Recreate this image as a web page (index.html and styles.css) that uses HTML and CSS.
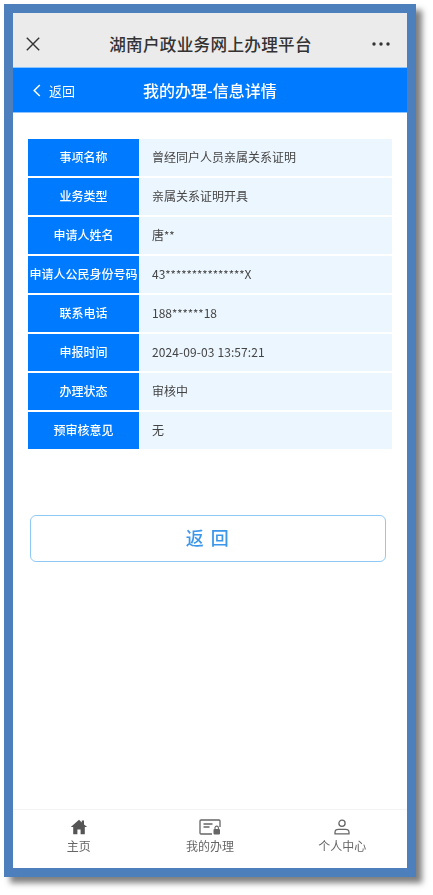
FILE: index.html
```html
<!DOCTYPE html>
<html lang="zh-CN">
<head>
<meta charset="utf-8">
<title>我的办理-信息详情</title>
<link rel="stylesheet" href="styles.css">
</head>
<body>
<div class="frame">
  <header class="wxbar">
    <svg class="wx-close" width="14" height="14" viewBox="0 0 14 14"><path d="M.8.8 13.2 13.2M13.200.8.800 13.200" fill="none" stroke="#333" stroke-width="1.400"/></svg>
    <h1 class="wx-title">湖南户政业务网上办理平台</h1>
    <svg class="wx-more" width="18" height="4" viewBox="0 0 18 4"><circle cx="2" cy="2" r="1.700" fill="#333"/><circle cx="9" cy="2" r="1.700" fill="#333"/><circle cx="16" cy="2" r="1.700" fill="#333"/></svg>
  </header>
  <nav class="pagebar">
    <span class="back">
      <svg width="8" height="13" viewBox="0 0 8 13"><path d="M6.800 1 1.200 6.500l5.600 5.500" fill="none" stroke="#fff" stroke-width="1.500"/></svg>
      <span>返回</span>
    </span>
    <h2 class="page-title">我的办理-信息详情</h2>
  </nav>
  <main class="content">
    <div class="table">
      <div class="row"><div class="label">事项名称</div><div class="value">曾经同户人员亲属关系证明</div></div>
      <div class="row"><div class="label">业务类型</div><div class="value">亲属关系证明开具</div></div>
      <div class="row"><div class="label">申请人姓名</div><div class="value"><span>唐<span class="mask">**</span></span></div></div>
      <div class="row"><div class="label">申请人公民身份号码</div><div class="value"><span>43<span class="mask">***************</span>X</span></div></div>
      <div class="row"><div class="label">联系电话</div><div class="value"><span>188<span class="mask">******</span>18</span></div></div>
      <div class="row"><div class="label">申报时间</div><div class="value date">2024-09-03 13:57:21</div></div>
      <div class="row"><div class="label">办理状态</div><div class="value">审核中</div></div>
      <div class="row"><div class="label">预审核意见</div><div class="value">无</div></div>
    </div>
    <button class="return" type="button">返 回</button>
  </main>
  <footer class="tabbar">
    <div class="tab">
      <svg width="18" height="16" viewBox="0 0 18 16"><path d="M9 .8.800 8h2.400v7.200h4.200v-4.600h3.200v4.600h4.200V8h2.400L14 5.400V1.600h-2.200v1.900z" fill="#555"/></svg>
      <span>主页</span>
    </div>
    <div class="tab">
      <svg width="22" height="16" viewBox="0 0 22 16"><path d="M13 15H2a1 1 0 0 1-1-1V2a1 1 0 0 1 1-1h18a1 1 0 0 1 1 1v6" fill="none" stroke="#666" stroke-width="1.300"/><path d="M4.500 5h9M4.500 8h6" stroke="#666" stroke-width="1.300"/><rect x="14.500" y="10" width="6.500" height="5.500" rx="1" fill="#666"/><path d="M16 10V8.800a1.700 1.700 0 0 1 3.400 0V10" fill="none" stroke="#666" stroke-width="1.100"/></svg>
      <span>我的办理</span>
    </div>
    <div class="tab tab-me">
      <svg width="16" height="16" viewBox="0 0 16 16"><circle cx="8" cy="4.300" r="3.100" fill="none" stroke="#666" stroke-width="1.300"/><path d="M1 14.800v-1.500C1 11.500 2.500 10.300 4.300 10.300h7.400c1.800 0 3.300 1.200 3.300 3v1.500z" fill="none" stroke="#666" stroke-width="1.300"/></svg>
      <span>个人中心</span>
    </div>
  </footer>
</div>
</body>
</html>
```

FILE: styles.css
```css
* { box-sizing: border-box; }
html, body { margin: 0; padding: 0; background: #fff; }
body {
  width: 433px;
  height: 895px;
  overflow: hidden;
  padding: 4px 0 0 4px;
  font-family: "Noto Sans CJK SC", "Noto Sans", sans-serif;
}
.frame {
  width: 412px;
  height: 873px;
  border: 9px solid #4d7fbd;
  background: #fff;
  box-shadow: 6px 6px 6px rgba(0, 0, 0, .5);
  display: flex;
  flex-direction: column;
  filter: blur(.5px);
}
.wxbar {
  height: 54px;
  flex: none;
  background: #ebebeb;
  display: grid;
  grid-template-columns: 1fr auto 1fr;
  align-items: center;
  padding: 8px 17px 0 13px;
}
.wx-more { justify-self: end; }
.wx-title {
  margin: 0 0 0 5px;
  font-size: 16.600px;
  font-weight: 500;
  color: #333;
  letter-spacing: .3px;
}
.pagebar {
  height: 46px;
  flex: none;
  background: #007aff;
  border-top: 1px solid #8cc4fb;
  border-bottom: 1px solid #8cc4fb;
  display: flex;
  align-items: center;
  position: relative;
  color: #fff;
}
.back {
  display: flex;
  align-items: center;
  gap: 8px;
  padding-left: 20px;
  font-size: 13px;
}
.page-title {
  margin: 0;
  position: absolute;
  left: 130px;
  font-size: 16px;
  font-weight: 500;
}
.content {
  flex: 1;
  padding: 26px 15px 0;
}
.table {
  display: flex;
  flex-direction: column;
  gap: 2px;
}
.row {
  height: 37px;
  display: flex;
}
.label {
  width: 111px;
  flex: none;
  background: #007aff;
  color: #fff;
  font-size: 12px;
  font-weight: 500;
  padding-bottom: 2px;
  display: flex;
  align-items: center;
  justify-content: center;
  margin-right: 1px;
  white-space: nowrap;
}
.value {
  flex: 1;
  background: #ecf6fe;
  color: #444;
  font-size: 12px;
  display: flex;
  align-items: center;
  padding: 0 0 2px 12px;
}
.mask { font-size: 11.300px; }
.date { letter-spacing: .1px; }
.return {
  display: block;
  width: 356px;
  height: 47px;
  margin: 66px 0 0 2px;
  padding: 0 0 3px;
  background: #fff;
  border: 1px solid #8ec8f5;
  border-radius: 6px;
  color: #3c97ea;
  font-family: inherit;
  font-size: 18px;
  font-weight: 500;
  letter-spacing: 1.500px;
}
.tabbar {
  height: 59px;
  flex: none;
  border-top: 1px solid #f3f3f3;
  display: grid;
  grid-template-columns: repeat(3, 1fr);
  padding-top: 9px;
}
.tab {
  display: flex;
  flex-direction: column;
  align-items: center;
  gap: 2px;
  font-size: 12px;
  line-height: 18px;
  color: #666;
}
.tab-me { padding-left: 2px; }
```
